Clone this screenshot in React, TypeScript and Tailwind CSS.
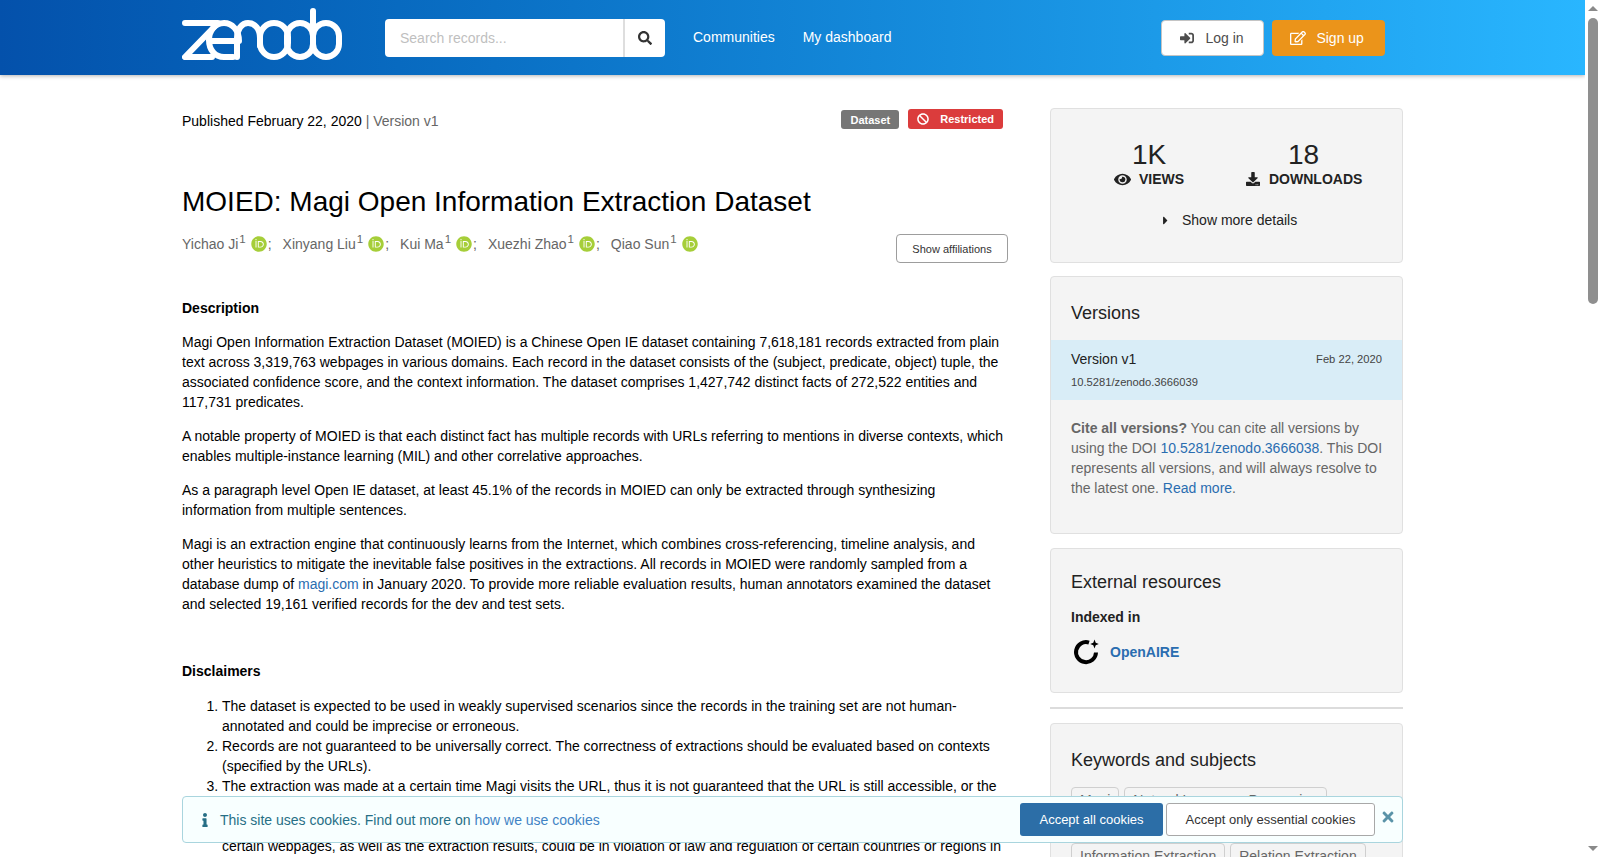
import { FaBan, FaCaretRight, FaDownload, FaEye, FaInfo, FaOrcid, FaRegEdit, FaSearch, FaSignInAlt, FaTimes } from "react-icons/fa";

const authors = ["Yichao Ji", "Xinyang Liu", "Kui Ma", "Xuezhi Zhao", "Qiao Sun"];

function ZenodoLogo() {
  return (
    <svg width="161" height="53" viewBox="0 0 161 53" fill="none" stroke="#fff" strokeWidth="6" strokeLinecap="round" strokeLinejoin="round">
      <path d="M3 15H36L3 49H30" />
      <path d="M27 33H57M57 33C57 22 50 15 42 15C33 15 27 23 27 32C27 42 33 49 42 49H51" />
      <path d="M55 49V30C55 21 60 15 66 15C73 15 78 21 78 30V38" />
      <rect x="78" y="15" width="28" height="34" rx="14" />
      <rect x="105" y="15" width="26" height="34" rx="13" />
      <path d="M131 34V3" />
      <rect x="131" y="15" width="26" height="34" rx="13" />
    </svg>
  );
}

function OpenAireLogo() {
  return (
    <svg width="28" height="28" viewBox="0 0 28 28" fill="none">
      <path d="M17 4.6A10 10 0 1 0 24 14.5" stroke="#000" strokeWidth="4" />
      <path d="M22.5 1.5L23.7 4.8L26.8 6L23.7 7.2L22.5 10.5L21.3 7.2L18.2 6L21.3 4.8Z" fill="#000" />
    </svg>
  );
}

function Panel({ className, children }: { className?: string; children: React.ReactNode }) {
  return <div className={`rounded border border-[#e0e0e0] bg-[#f4f4f4] ${className ?? ""}`}>{children}</div>;
}

function Keyword({ label }: { label: string }) {
  return <span className="rounded border border-[#cfcfcf] bg-[#f4f4f4] px-2 pt-[2px] pb-[4px] text-[#666]">{label}</span>;
}

export default function App() {
  return (
    <div className="relative flex h-[857px] w-[1600px] overflow-hidden bg-white font-['Liberation_Sans',Arial,sans-serif] text-[14px] leading-[20px] text-black">
      <div className="relative w-[1585px] overflow-hidden">
        <header className="relative z-10 flex h-[75px] items-start bg-gradient-to-r from-[#0451ab] to-[#29b6ff] pl-[182px] shadow-[0_1px_4px_rgba(0,0,0,0.3)]">
          <div className="mt-2">
            <ZenodoLogo />
          </div>
          <div className="ml-[42px] mt-[19px] flex h-[38px] w-[280px] rounded bg-white">
            <div className="flex w-[240px] items-center border-r-2 border-[#dedede] pl-[15px] text-[#bfbfbf]">Search records...</div>
            <div className="flex flex-1 items-center justify-center text-[14px] text-[#333]">
              <FaSearch />
            </div>
          </div>
          <nav className="ml-7 mt-[27px] flex gap-7 text-white">
            <span>Communities</span>
            <span>My dashboard</span>
          </nav>
          <div className="ml-[270px] mt-5 flex gap-2">
            <div className="flex h-9 w-[103px] items-center rounded border border-[#c4c4c4] bg-white pl-[18px] text-[#4d4d4d]">
              <FaSignInAlt className="text-[14px]" />
              <span className="ml-[11px]">Log in</span>
            </div>
            <div className="flex h-9 w-[113px] items-center rounded bg-[#eb941a] pl-[18px] text-white">
              <FaRegEdit className="text-[16px]" />
              <span className="ml-[10px]">Sign up</span>
            </div>
          </div>
        </header>

        <main className="flex items-start pl-[182px]">
          <div className="w-[826px]">
            <div className="mt-[34px] flex items-start justify-between">
              <div className="mt-[2px]">
                Published February 22, 2020 <span className="text-[#666]">| Version v1</span>
              </div>
              <div className="mr-[5px] flex gap-[9px] text-[11px] font-bold leading-[20px] text-white">
                <span className="mt-px h-[19px] rounded-[3px] bg-[#767676] px-[9px]">Dataset</span>
                <span className="flex h-5 items-center rounded-[3px] bg-[#db3c3c] px-[9px]">
                  <FaBan className="mr-[11px] text-[12px]" />
                  Restricted
                </span>
              </div>
            </div>
            <h1 className="mt-[53px] text-[28px] leading-[36px] font-normal">MOIED: Magi Open Information Extraction Dataset</h1>
            <div className="mt-[14px] flex items-start justify-between">
              <div className="flex text-[#666]">
                {authors.map((name, i) => (
                  <span key={name} className="mr-[11px] flex items-center">
                    {name}
                    <sup className="top-[-4px] ml-[1px] text-[11.5px] leading-none">1</sup>
                    <FaOrcid className="ml-[5px] text-[16px] text-[#a6ce39]" />
                    {i < authors.length - 1 && <span className="ml-[1px]">;</span>}
                  </span>
                ))}
              </div>
              <div className="flex h-[29px] w-[112px] items-center justify-center rounded border border-[#9d9d9d] text-[11px] text-[#333]">Show affiliations</div>
            </div>

            <h2 className="mt-[35px] font-bold">Description</h2>
            <p className="mt-[14px]">
              Magi Open Information Extraction Dataset (MOIED) is a Chinese Open IE dataset containing 7,618,181 records extracted from plain text across 3,319,763 webpages in various domains. Each record in the dataset consists of the (subject, predicate, object) tuple, the associated confidence score, and the context information. The dataset comprises 1,427,742 distinct facts of 272,522 entities and 117,731 predicates.
            </p>
            <p className="mt-[14px]">
              A notable property of MOIED is that each distinct fact has multiple records with URLs referring to mentions in diverse contexts, which enables multiple-instance learning (MIL) and other correlative approaches.
            </p>
            <p className="mt-[14px]">
              As a paragraph level Open IE dataset, at least 45.1% of the records in MOIED can only be extracted through synthesizing information from multiple sentences.
            </p>
            <p className="mt-[14px]">
              Magi is an extraction engine that continuously learns from the Internet, which combines cross-referencing, timeline analysis, and other heuristics to mitigate the inevitable false positives in the extractions. All records in MOIED were randomly sampled from a database dump of <span className="text-[#2a6db0]">magi.com</span> in January 2020. To provide more reliable evaluation results, human annotators examined the dataset and selected 19,161 verified records for the dev and test sets.
            </p>
            <h2 className="mt-[47px] font-bold">Disclaimers</h2>
            <ol className="mt-[15px] list-decimal pl-10">
              <li>The dataset is expected to be used in weakly supervised scenarios since the records in the training set are not human-annotated and could be imprecise or erroneous.</li>
              <li>Records are not guaranteed to be universally correct. The correctness of extractions should be evaluated based on contexts (specified by the URLs).</li>
              <li>The extraction was made at a certain time Magi visits the URL, thus it is not guaranteed that the URL is still accessible, or the content is still the same.</li>
              <li>
                Some of the records were extracted from pages that may be protected by copyright, and the access to
                <br />
                certain webpages, as well as the extraction results, could be in violation of law and regulation of certain countries or regions in
              </li>
            </ol>
          </div>

          <aside className="ml-[42px] w-[353px]">
            <Panel className="mt-[33px] h-[155px] px-5">
              <div className="mt-[32px] flex pl-[43px] text-[28px] leading-[28px] text-[#222]">
                <div className="w-[154px] pl-[18px]">1K</div>
                <div className="pl-[20px]">18</div>
              </div>
              <div className="flex pl-[43px] font-bold text-[#222]">
                <div className="flex w-[132px] items-center">
                  <FaEye className="mr-[8px] text-[17px]" />
                  VIEWS
                </div>
                <div className="flex items-center">
                  <FaDownload className="mr-[9px] text-[14px]" />
                  DOWNLOADS
                </div>
              </div>
              <div className="mt-[21px] flex items-center pl-[88px] text-[#222]">
                <FaCaretRight className="mr-[10px] text-[13px]" />
                Show more details
              </div>
            </Panel>

            <Panel className="mt-[13px] h-[258px]">
              <h3 className="mt-[25px] px-5 text-[18px] leading-[22px] font-normal text-[#222]">Versions</h3>
              <div className="mt-[16px] h-[60px] bg-[#d9edf7] px-5 pt-[9px]">
                <div className="flex items-center justify-between">
                  <span className="text-[#222]">Version v1</span>
                  <span className="text-[11.2px] text-[#444]">Feb 22, 2020</span>
                </div>
                <div className="mt-[3px] text-[11.2px] text-[#444]">10.5281/zenodo.3666039</div>
              </div>
              <p className="mt-[18px] pl-5 pr-[18px] text-[#666]">
                <b className="text-[#666]">Cite all versions?</b> You can cite all versions by using the DOI <span className="text-[#2a6db0]">10.5281/zenodo.3666038</span>. This DOI represents all versions, and will always resolve to the latest one. <span className="text-[#2a6db0]">Read more</span>.
              </p>
            </Panel>

            <Panel className="mt-[14px] h-[145px] px-5">
              <h3 className="mt-[22px] text-[18px] leading-[22px] font-normal text-[#222]">External resources</h3>
              <div className="mt-[14px] font-bold text-[#222]">Indexed in</div>
              <div className="mt-[11px] flex items-center pl-[1px]">
                <OpenAireLogo />
                <span className="ml-[10px] font-bold text-[#2a6db0]">OpenAIRE</span>
              </div>
            </Panel>

            <hr className="mt-[14px] border-t-2 border-[#dcdcdc]" />

            <Panel className="mt-[14px] h-[200px] px-5">
              <h3 className="mt-[25px] text-[18px] leading-[22px] font-normal text-[#222]">Keywords and subjects</h3>
              <div className="mt-[16px] flex flex-wrap gap-x-[5px] gap-y-[28px]">
                <Keyword label="Magi" />
                <Keyword label="Natural Language Processing" />
                <Keyword label="Information Extraction" />
                <Keyword label="Relation Extraction" />
              </div>
            </Panel>
          </aside>
        </main>

        {/* cookie banner sits over the page */}
        <div className="absolute left-[182px] top-[796px] z-20 flex h-[47px] w-[1221px] items-center rounded border border-[#a9d5de] bg-[#f8ffff] pl-[15px] text-[#276f86]">
          <FaInfo className="text-[14px]" />
          <span className="ml-2">
            This site uses cookies. Find out more on <span className="text-[#4183c4]">how we use cookies</span>
          </span>
          <div className="ml-auto flex items-center gap-[3px]">
            <span className="flex h-[33px] w-[143px] items-center justify-center rounded-[3px] bg-[#2c6ea7] text-[13px] text-white">Accept all cookies</span>
            <span className="flex h-[33px] w-[209px] items-center justify-center rounded-[3px] border border-[#a8a8a8] bg-white text-[13px] text-[#333]">Accept only essential cookies</span>
          </div>
          <FaTimes className="mb-[6px] ml-[5px] mr-[6px] text-[16px] text-[#5a93a8]" />
        </div>
      </div>

      {/* window scrollbar */}
      <div className="flex w-[15px] flex-col items-center bg-white">
        <div className="mt-[6px] h-0 w-0 border-x-[5px] border-b-[5px] border-x-transparent border-b-[#8a8a8a]" />
        <div className="mt-[7px] h-[286px] w-[10px] rounded-[5px] bg-[#8f8f8f]" />
        <div className="mt-auto mb-[6px] h-0 w-0 border-x-[5px] border-t-[5px] border-x-transparent border-t-[#8a8a8a]" />
      </div>
    </div>
  );
}
